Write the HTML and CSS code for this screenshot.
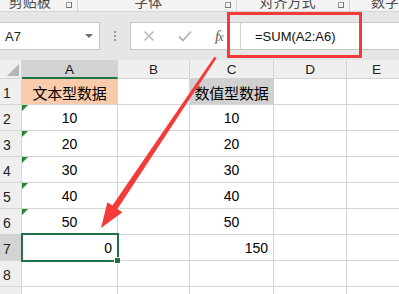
FILE: index.html
```html
<!DOCTYPE html>
<html>
<head>
<meta charset="utf-8">
<link rel="stylesheet" href="styles.css">
</head>
<body>
<div class="app">
  <div class="ribbon">
    <div class="grp g1"><span class="glabel">剪贴板</span><span class="launch"></span></div>
    <div class="grp g2"><span class="glabel">字体</span><span class="launch"></span></div>
    <div class="grp g3"><span class="glabel">对齐方式</span><span class="launch"></span></div>
    <div class="grp g4"><span class="glabel">数字</span></div>
  </div>
  <div class="fbar">
    <div class="namebox"><span class="nbtext">A7</span><span class="caret"></span></div>
    <div class="dots"><i></i><i></i><i></i></div>
    <div class="fbox">
      <div class="btns">
        <svg class="ico" width="12" height="12" viewBox="0 0 12 12"><path d="M1.5 1.5L10.5 10.5M10.5 1.5L1.5 10.5" stroke="#b4b4b4" stroke-width="1.4" fill="none"/></svg>
        <svg class="ico" width="14" height="12" viewBox="0 0 14 12"><path d="M1 6.5L5 10.5L13 1.5" stroke="#b4b4b4" stroke-width="1.8" fill="none"/></svg>
        <span class="fx">f<span class="fxx">x</span></span>
      </div>
      <div class="finput">=SUM(A2:A6)</div>
    </div>
  </div>
  <div class="sheet">
    <div class="hd corner"><span class="tri"></span></div>
    <div class="hd col sel">A</div>
    <div class="hd col">B</div>
    <div class="hd col">C</div>
    <div class="hd col">D</div>
    <div class="hd col">E</div>

    <div class="hd row">1</div>
    <div class="c ctr cjk orange">文本型数据</div><div class="c"></div>
    <div class="c ctr cjk grey">数值型数据</div><div class="c"></div><div class="c"></div>

    <div class="hd row">2</div>
    <div class="c ctr"><span class="err"></span>10</div><div class="c"></div>
    <div class="c ctr">10</div><div class="c"></div><div class="c"></div>

    <div class="hd row">3</div>
    <div class="c ctr"><span class="err"></span>20</div><div class="c"></div>
    <div class="c ctr">20</div><div class="c"></div><div class="c"></div>

    <div class="hd row">4</div>
    <div class="c ctr"><span class="err"></span>30</div><div class="c"></div>
    <div class="c ctr">30</div><div class="c"></div><div class="c"></div>

    <div class="hd row">5</div>
    <div class="c ctr"><span class="err"></span>40</div><div class="c"></div>
    <div class="c ctr">40</div><div class="c"></div><div class="c"></div>

    <div class="hd row">6</div>
    <div class="c ctr"><span class="err"></span>50</div><div class="c"></div>
    <div class="c ctr">50</div><div class="c"></div><div class="c"></div>

    <div class="hd row selrow">7</div>
    <div class="c rt active">0<span class="handle"></span></div><div class="c"></div>
    <div class="c rt">150</div><div class="c"></div><div class="c"></div>

    <div class="hd row">8</div>
    <div class="c"></div><div class="c"></div><div class="c"></div><div class="c"></div><div class="c"></div>

    <div class="hd row">9</div>
    <div class="c"></div><div class="c"></div><div class="c"></div><div class="c"></div><div class="c"></div>
  </div>
  <div class="redbox"></div>
  <svg class="arrow" width="399" height="294" viewBox="0 0 399 294">
    <polygon fill="#f53a3a" points="215.4,57.3 216.6,58.1 117.4,208.9 122.4,212.2 101,228 107.4,202.2 112.4,205.5 214.4,56.7"/>
  </svg>
</div>
</body>
</html>
```
FILE: styles.css
```css
* { box-sizing: border-box; }
html, body { margin: 0; padding: 0; }
body {
  width: 399px;
  height: 294px;
  overflow: hidden;
  background: #ffffff;
  font-family: "Liberation Sans", "Noto Sans CJK SC", sans-serif;
  color: #000;
}
.app {
  position: relative;
  width: 399px;
  height: 294px;
  overflow: hidden;
}

/* ribbon group labels */
.ribbon {
  display: flex;
  height: 12px;
  background: #f3f3f3;
  border-bottom: 1px solid #d6d6d6;
  overflow: hidden;
}
.grp {
  position: relative;
  display: flex;
  align-items: flex-end;
  height: 11px;
  border-right: 1px solid #d4d4d4;
}
.g1 { width: 79px; }
.g2 { width: 162px; }
.g3 { width: 115px; }
.g4 { flex: 1; border-right: none; }
.glabel {
  flex: 1;
  text-align: center;
  font-family: "Noto Sans CJK SC", sans-serif;
  font-size: 14px;
  line-height: 14px;
  color: #4a4a4a;
  margin-bottom: 3px;
  white-space: nowrap;
}
.g1 .glabel { padding-right: 6px; }
.g2 .glabel { padding-right: 6px; }
.g4 .glabel { flex: none; margin-left: 21px; }
.launch {
  position: relative;
  width: 6px;
  height: 6px;
  margin: 0 5px 3px 0;
  border-right: 1px solid #777;
  border-bottom: 1px solid #777;
  align-self: flex-end;
}
.launch::after {
  content: "";
  position: absolute;
  left: 0;
  top: 0;
  width: 4px;
  height: 4px;
  border-left: 1px solid #999;
  border-top: 1px solid #999;
}

/* formula bar */
.fbar {
  display: flex;
  align-items: flex-start;
  height: 48px;
  padding-top: 10px;
  background: #e6e6e6;
}
.namebox {
  display: flex;
  align-items: center;
  width: 100px;
  height: 28px;
  background: #fff;
  border: 1px solid #c6c6c6;
  border-left: none;
  padding-left: 5px;
}
.nbtext {
  flex: 1;
  font-size: 13px;
  color: #222;
}
.caret {
  width: 0;
  height: 0;
  border-left: 4px solid transparent;
  border-right: 4px solid transparent;
  border-top: 4px solid #6b6b6b;
  margin-right: 6px;
}
.dots {
  display: flex;
  flex-direction: column;
  gap: 2px;
  width: 30px;
  padding: 9px 0 0 14px;
}
.dots i {
  display: block;
  width: 2px;
  height: 2px;
  background: #9a9a9a;
}
.fbox {
  flex: 1;
  display: flex;
  height: 28px;
  background: #fff;
  border: 1px solid #c6c6c6;
  border-right: none;
}
.btns {
  display: flex;
  align-items: center;
  width: 110px;
  border-right: 1px solid #d4d4d4;
  padding-left: 12px;
}
.ico { display: block; }
.btns .ico:first-child { margin-right: 23px; }
.fx {
  margin-left: 23px;
  font-family: "Liberation Serif", serif;
  font-style: italic;
  font-size: 15px;
  color: #555;
  letter-spacing: -1px;
}
.fxx { font-size: 12px; }
.finput {
  flex: 1;
  display: flex;
  align-items: center;
  padding-left: 14px;
  font-size: 13px;
  color: #111;
}

/* sheet */
.sheet {
  display: grid;
  grid-template-columns: 22px 96px 72px 84px 73px 60px;
  grid-template-rows: 19px repeat(9, 26px);
  width: 407px;
}
.hd {
  background: #efefef;
  border-right: 1px solid #d4d4d4;
  border-bottom: 1px solid #d4d4d4;
  font-size: 13.5px;
  color: #222;
}
.corner { position: relative; }
.tri {
  position: absolute;
  right: 2px;
  bottom: 2px;
  width: 0;
  height: 0;
  border-left: 12px solid transparent;
  border-bottom: 12px solid #b5b5b5;
}
.col {
  display: flex;
  align-items: center;
  justify-content: center;
  padding-top: 1px;
}
.col.sel {
  background: #d3d3d3;
  border-bottom: 2px solid #217346;
  color: #111;
}
.row {
  display: flex;
  align-items: flex-end;
  padding: 0 0 3px 3px;
  font-size: 14px;
}
.row.selrow { background: #d3d3d3; }
.c {
  position: relative;
  display: flex;
  align-items: flex-end;
  border-right: 1px solid #d4d4d4;
  border-bottom: 1px solid #d4d4d4;
  font-size: 14px;
  line-height: 16px;
  padding-bottom: 4px;
  white-space: nowrap;
}
.ctr { justify-content: center; }
.rt { justify-content: flex-end; padding-right: 5px; }
.cjk {
  font-family: "Noto Sans CJK SC", sans-serif;
  font-size: 15px;
  line-height: 18px;
  padding-bottom: 2px;
  letter-spacing: -0.2px;
}
.orange { background: #f8cbad; }
.grey { background: #d0d0d0; }
.err {
  position: absolute;
  left: 0;
  top: 0;
  width: 0;
  height: 0;
  border-top: 6px solid #1d8a2e;
  border-right: 6px solid transparent;
}
.active::after {
  content: "";
  position: absolute;
  top: -2px;
  left: -1px;
  right: -2px;
  bottom: -2px;
  border: 2px solid #217346;
}
.handle {
  position: absolute;
  right: -4px;
  bottom: -4px;
  width: 7px;
  height: 7px;
  background: #217346;
  border: 1px solid #fff;
  z-index: 2;
}

/* overlays */
.redbox {
  position: absolute;
  left: 227px;
  top: 12px;
  width: 135px;
  height: 46px;
  border: 3px solid #f53a3a;
}
.arrow {
  position: absolute;
  left: 0;
  top: 0;
}
```
